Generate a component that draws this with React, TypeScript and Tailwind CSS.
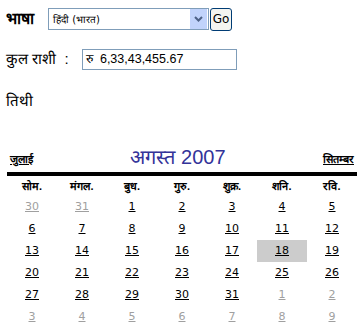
import React from 'react'

const days = ['सोम.', 'मंगल.', 'बुध.', 'गुरु.', 'शुक्र.', 'शनि.', 'रवि.']

const weeks: { d: number; other?: boolean }[][] = [
  [{ d: 30, other: true }, { d: 31, other: true }, { d: 1 }, { d: 2 }, { d: 3 }, { d: 4 }, { d: 5 }],
  [{ d: 6 }, { d: 7 }, { d: 8 }, { d: 9 }, { d: 10 }, { d: 11 }, { d: 12 }],
  [{ d: 13 }, { d: 14 }, { d: 15 }, { d: 16 }, { d: 17 }, { d: 18 }, { d: 19 }],
  [{ d: 20 }, { d: 21 }, { d: 22 }, { d: 23 }, { d: 24 }, { d: 25 }, { d: 26 }],
  [{ d: 27 }, { d: 28 }, { d: 29 }, { d: 30 }, { d: 31 }, { d: 1, other: true }, { d: 2, other: true }],
  [3, 4, 5, 6, 7, 8, 9].map((d) => ({ d, other: true }))
]

const App: React.FC = () => {
  return (
    <div className="w-[364px] h-[334px] bg-white text-black font-['Liberation_Sans',sans-serif] overflow-hidden">
      {/* language */}
      <div className="flex items-center pl-[6px] pt-[7px] h-[31px]">
        <span className="font-bold text-[16px] w-[42px]">भाषा</span>
        <div className="flex items-center w-[161px] h-[22px] border border-[#7f9db9] bg-white">
          <span className="flex-1 pl-[4px] text-[10px] font-['DejaVu_Sans',sans-serif]">हिंदी (भारत)</span>
          <span className="w-[17px] h-[20px] mr-[1px] bg-[#c1d3fb] flex items-center justify-center">
            <svg width="9" height="6" viewBox="0 0 9 6">
              <path d="M1 1 L4.5 4.5 L8 1" stroke="#4d6185" strokeWidth="2" fill="none" />
            </svg>
          </span>
        </div>
        <button className="ml-[1px] w-[22px] h-[23px] rounded-[3px] border border-[#003c74] bg-[#f4f4f0] text-[12px] font-['DejaVu_Sans',sans-serif] leading-none">
          Go
        </button>
      </div>

      {/* amount */}
      <div className="flex items-center pl-[6px] mt-[17px] h-[22px]">
        <span className="text-[15px] w-[76px]">कुल राशी &nbsp;:</span>
        <div className="w-[155px] h-[21px] border border-[#7f9db9] flex items-center pl-[3px] text-[12.5px]">
          रु&nbsp; 6,33,43,455.67
        </div>
      </div>

      <div className="pl-[6px] mt-[20px] text-[15px] h-[24px]">तिथी</div>

      {/* calendar */}
      <div className="ml-[7px] mt-[29px] w-[350px]">
        <div className="flex items-end justify-between h-[29px] pb-[5px]">
          <span className="pl-[3px] text-[11px] font-bold underline">जुलाई</span>
          <span className="text-[20px] text-[#333399] leading-none">अगस्त 2007</span>
          <span className="pr-[3px] text-[11px] font-bold underline">सितम्बर</span>
        </div>
        <div className="h-[4px] bg-black" />
        <div className="grid grid-cols-7 h-[20px] items-center text-[11px] font-bold">
          {days.map((d) => (
            <div key={d} className="text-center">{d}</div>
          ))}
        </div>
        {weeks.map((w, i) => (
          <div key={i} className="grid grid-cols-7 h-[22px] text-[11px] font-['DejaVu_Sans',sans-serif]">
            {w.map((c, j) => (
              <div
                key={j}
                className={
                  'flex items-center justify-center ' +
                  (i === 2 && j === 5 ? 'bg-[#cccccc] ' : '') +
                  (c.other ? 'text-[#a0a0a0]' : 'text-black')
                }
              >
                <span className="underline">{c.d}</span>
              </div>
            ))}
          </div>
        ))}
      </div>
    </div>
  )
}

export default App
